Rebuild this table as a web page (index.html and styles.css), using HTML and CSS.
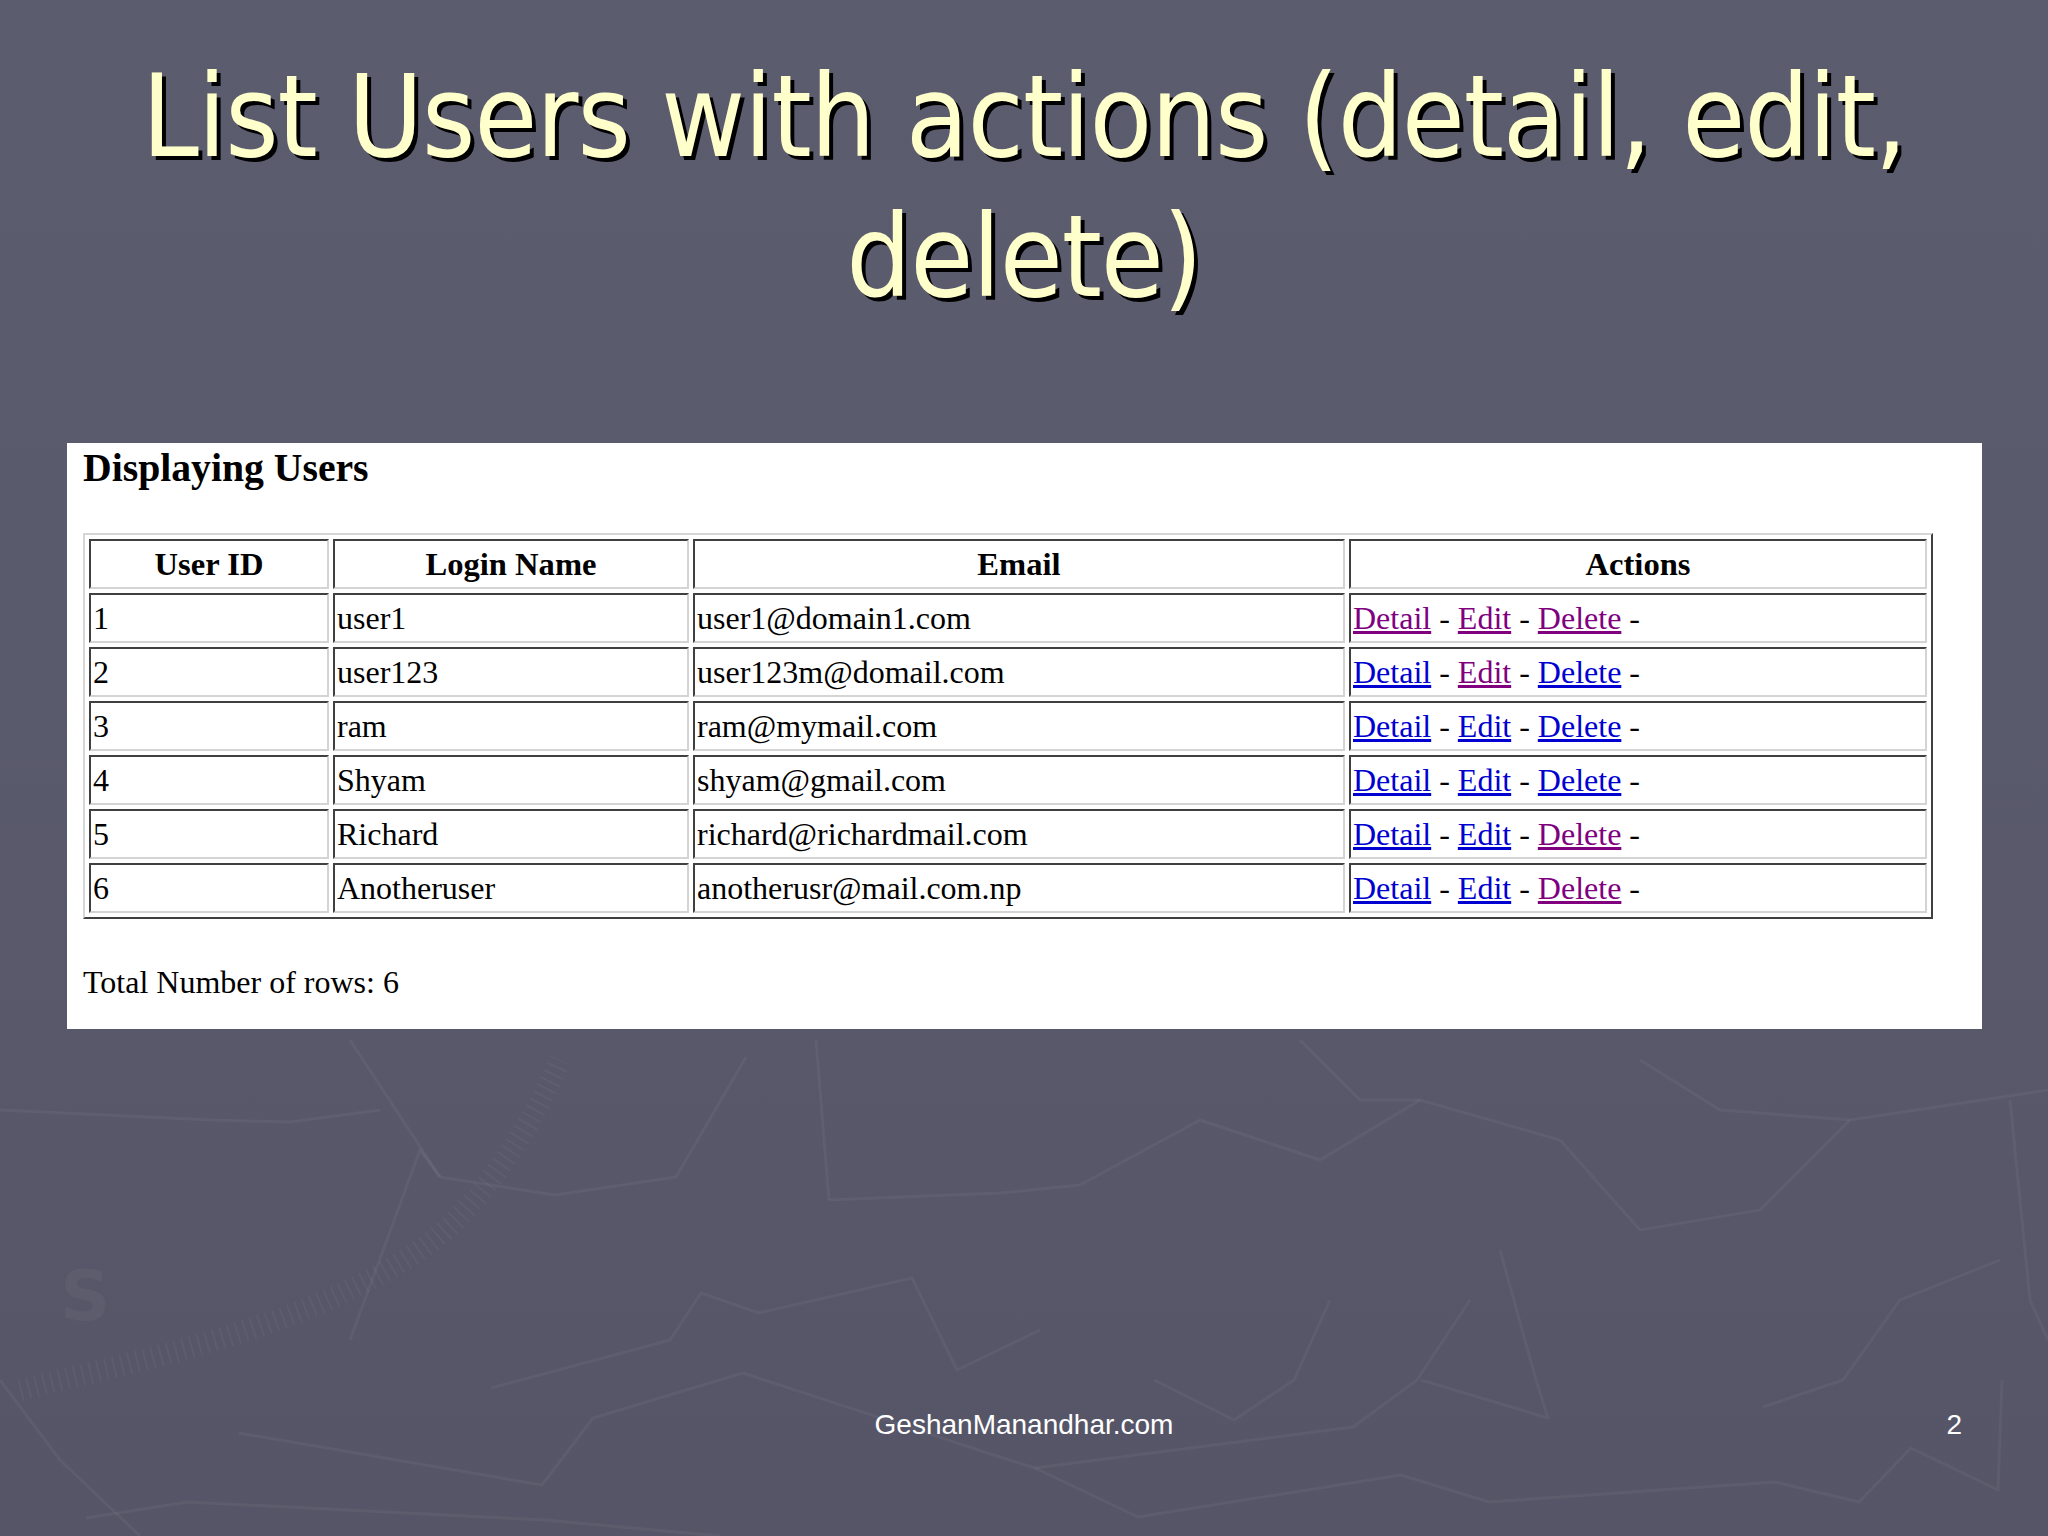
FILE: index.html
```html
<!DOCTYPE html>
<html lang="en">
<head>
<meta charset="utf-8">
<title>List Users with actions</title>
<link rel="stylesheet" href="styles.css">
</head>
<body>
<div class="slide">
  <svg class="backdrop" width="2048" height="1536" viewBox="0 0 2048 1536" aria-hidden="true">
    <g class="map-lines">
      <polyline points="0,1110 210,1120 290,1122 380,1110"/>
      <polyline points="440,1177 555,1195 676,1177 746,1057"/>
      <polyline points="829,1200 1000,1193 1080,1185"/>
      <polyline points="829,1200 816,1040"/>
      <polyline points="491,1388 670,1340 701,1293 759,1313 912,1278 957,1370 1040,1330"/>
      <polyline points="239,1433 542,1485 593,1418 743,1373 1000,1457 1035,1468"/>
      <polyline points="86,1518 188,1502 545,1520 720,1536"/>
      <polyline points="350,1340 420,1150 440,1177"/>
      <polyline points="440,1177 350,1040"/>
      <polyline points="1035,1468 1138,1517 1401,1475 1489,1502 1775,1482 1859,1502 1911,1448 1998,1490 2002,1380"/>
      <polyline points="1035,1468 1353,1427 1417,1380 1470,1300"/>
      <polyline points="1154,1380 1234,1420 1294,1380 1330,1300"/>
      <polyline points="1421,1380 1548,1418 1536,1380 1500,1250"/>
      <polyline points="1763,1407 1843,1380 1900,1300 2000,1260"/>
      <polyline points="1080,1185 1200,1120 1320,1160 1420,1100 1560,1140"/>
      <polyline points="1560,1140 1640,1230 1760,1210 1850,1120 2048,1090"/>
      <polyline points="1640,1060 1720,1110 1850,1120"/>
      <polyline points="1300,1040 1360,1100 1420,1100"/>
      <polyline points="0,1380 60,1460 140,1536"/>
      <polyline points="2010,1100 2030,1300 2048,1340"/>
    </g>
    <g class="compass">
      <path d="M20,1390 C140,1360 300,1330 420,1250 C470,1215 520,1150 560,1060"/>
      <text x="60" y="1320" class="compass-letter">S</text>
    </g>
  </svg>

  <h1 class="title">List Users with actions (detail, edit,<br>delete)</h1>

  <div class="panel">
    <h3 class="panel-heading">Displaying Users</h3>
    <table class="users">
      <colgroup>
        <col class="c-id">
        <col class="c-login">
        <col class="c-email">
        <col class="c-actions">
      </colgroup>
      <thead>
        <tr><th>User ID</th><th>Login Name</th><th>Email</th><th>Actions</th></tr>
      </thead>
      <tbody>
        <tr><td>1</td><td>user1</td><td>user1@domain1.com</td><td><a class="visited" href="#">Detail</a> - <a class="visited" href="#">Edit</a> - <a class="visited" href="#">Delete</a> -</td></tr>
        <tr><td>2</td><td>user123</td><td>user123m@domail.com</td><td><a href="#">Detail</a> - <a class="visited" href="#">Edit</a> - <a href="#">Delete</a> -</td></tr>
        <tr><td>3</td><td>ram</td><td>ram@mymail.com</td><td><a href="#">Detail</a> - <a href="#">Edit</a> - <a href="#">Delete</a> -</td></tr>
        <tr><td>4</td><td>Shyam</td><td>shyam@gmail.com</td><td><a href="#">Detail</a> - <a href="#">Edit</a> - <a href="#">Delete</a> -</td></tr>
        <tr><td>5</td><td>Richard</td><td>richard@richardmail.com</td><td><a href="#">Detail</a> - <a href="#">Edit</a> - <a class="visited" href="#">Delete</a> -</td></tr>
        <tr><td>6</td><td>Anotheruser</td><td>anotherusr@mail.com.np</td><td><a href="#">Detail</a> - <a href="#">Edit</a> - <a class="visited" href="#">Delete</a> -</td></tr>
      </tbody>
    </table>
    <p class="total">Total Number of rows: 6</p>
  </div>

  <footer class="footer">
    <span class="footer-spacer"></span>
    <span class="footer-site">GeshanManandhar.com</span>
    <span class="footer-num">2</span>
  </footer>
</div>
</body>
</html>
```

FILE: styles.css
```css
html, body {
  margin: 0;
  padding: 0;
}

body {
  width: 2048px;
  height: 1536px;
  overflow: hidden;
  background: #5a5a6d;
}

.slide {
  position: relative;
  width: 2048px;
  height: 1536px;
  display: flex;
  flex-direction: column;
  background: linear-gradient(180deg, #5c5c6f 0%, #5a5a6d 45%, #555567 100%);
}

.backdrop {
  position: absolute;
  left: 0;
  top: 0;
  z-index: 0;
  pointer-events: none;
}

.map-lines polyline,
.compass path {
  fill: none;
  stroke: rgba(255, 255, 255, 0.045);
  stroke-width: 3;
  stroke-linejoin: round;
}

.compass path {
  stroke-width: 22;
  stroke-dasharray: 2 6;
  stroke: rgba(255, 255, 255, 0.04);
}

.compass-letter {
  font-family: "DejaVu Sans", sans-serif;
  font-size: 70px;
  font-weight: bold;
  fill: rgba(255, 255, 255, 0.04);
}

.title,
.panel,
.footer {
  position: relative;
  z-index: 1;
}

.title {
  margin: 47px 0 0 0;
  font-family: "DejaVu Sans Condensed", "DejaVu Sans", sans-serif;
  font-stretch: semi-condensed;
  font-weight: normal;
  font-size: 114px;
  line-height: 140px;
  letter-spacing: -1.1px;
  color: #ffffcc;
  text-align: center;
  text-shadow: 4px 4px 0 #000;
}

.panel {
  margin: 116px 0 0 67px;
  width: 1915px;
  box-sizing: border-box;
  padding: 3px 16px 27px 16px;
  background: #ffffff;
  font-family: "Liberation Serif", "Times New Roman", serif;
  color: #000;
}

.panel-heading {
  margin: 0;
  font-size: 39.7px;
  line-height: 44px;
  font-weight: bold;
}

.users {
  margin-top: 43px;
  width: 1850px;
  table-layout: fixed;
  border-collapse: separate;
  border-spacing: 4px;
  border-style: solid;
  border-width: 2px;
  border-color: #d6d6d6 #404040 #404040 #d6d6d6;
}

.c-id { width: 240px; }
.c-login { width: 356px; }
.c-email { width: 652px; }
.c-actions { width: 578px; }

.users th,
.users td {
  border-style: solid;
  border-width: 2px;
  border-color: #404040 #d4d4d4 #d4d4d4 #404040;
  padding: 2px 3px;
  font-size: 32px;
  line-height: 42px;
  white-space: nowrap;
  overflow: hidden;
}

.users th {
  font-weight: bold;
  font-size: 32.6px;
  text-align: center;
}

.users td {
  text-align: left;
  font-weight: normal;
  padding-left: 2px;
}

.users a {
  color: #0000d0;
  text-decoration: underline;
}

.users a.visited {
  color: #800080;
}

.total {
  margin: 43px 0 0 0;
  font-size: 32px;
  line-height: 40px;
}

.footer {
  margin-top: auto;
  padding: 0 86px 95px 86px;
  display: grid;
  grid-template-columns: 1fr auto 1fr;
  font-family: "Liberation Sans", Arial, sans-serif;
  font-size: 28px;
  line-height: 32px;
  color: #ffffff;
}

.footer-num {
  justify-self: end;
}
```
